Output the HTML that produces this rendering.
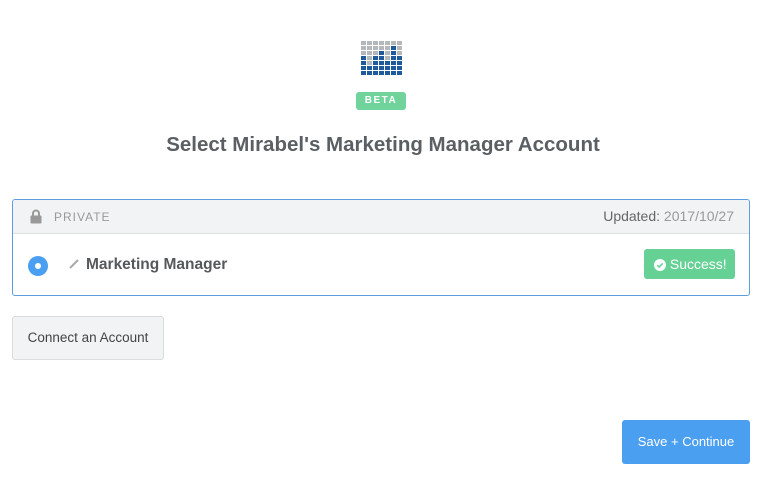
<!DOCTYPE html>
<html><head><style>
*{box-sizing:border-box;margin:0;padding:0}
body{width:766px;height:491px;background:#fff;font-family:"Liberation Sans",sans-serif;position:relative;overflow:hidden;color:#555}
.abs{position:absolute}
.cell{position:absolute;width:5px;height:4px}
</style></head><body>
<div class="abs" style="left:361px;top:41px;width:42px;height:36px" id="logo"></div>
<div class="abs" style="left:356px;top:92px;width:50px;height:18px;background:#6fd39b;border-radius:3px;color:#fff;font-weight:bold;font-size:10px;letter-spacing:1.5px;text-align:center;line-height:18px">BETA</div>
<div class="abs" style="left:0;width:766px;top:133px;text-align:center;font-size:20.5px;font-weight:bold;color:#5a5f63">Select Mirabel's Marketing Manager Account</div>
<div class="abs" style="left:12px;top:199px;width:738px;height:97px;border:1px solid #5e9ee0;border-radius:3px;overflow:hidden">
 <div style="height:34px;background:#f1f3f4;border-bottom:1px solid #dde0e2;position:relative">
  <svg class="abs" style="left:17px;top:9px" width="12" height="15" viewBox="0 0 12 15"><path d="M3 7V4.5a3 3 0 0 1 6 0V7" fill="none" stroke="#999" stroke-width="2"/><rect x="0.5" y="6.5" width="11" height="8" rx="1" fill="#999"/></svg>
  <span class="abs" style="left:41px;top:10px;font-size:12px;letter-spacing:1px;color:#999">PRIVATE</span>
  <span class="abs" style="right:15px;top:8px;font-size:14px;color:#666">Updated: <span style="color:#999">2017/10/27</span></span>
 </div>
 <div class="abs" style="left:15px;top:56px;width:20px;height:20px;border-radius:50%;background:#4a9ff0"><div style="position:absolute;left:7px;top:7px;width:6px;height:6px;border-radius:50%;background:#fff"></div></div>
 <svg class="abs" style="left:55px;top:58px" width="12" height="12" viewBox="0 0 12 12"><path d="M2 10L10 2" stroke="#aaa" stroke-width="2"/></svg>
 <span class="abs" style="left:73px;top:56px;font-size:15.5px;font-weight:bold;color:#55595c">Marketing Manager</span>
 <div class="abs" style="left:631px;top:49px;width:91px;height:30px;background:#66d194;border-radius:3px;color:#fff;font-size:14px;line-height:30px;padding-left:10px">
  <svg style="vertical-align:-2px" width="12" height="12" viewBox="0 0 12 12"><circle cx="6" cy="6" r="6" fill="#fff"/><path d="M3.3 6.2l1.8 1.8 3.6-3.6" stroke="#66d194" stroke-width="1.6" fill="none"/></svg> Success!
 </div>
</div>
<div class="abs" style="left:12px;top:316px;width:152px;height:44px;background:#f1f3f4;border:1px solid #d8dcde;border-radius:3px;font-size:13.5px;color:#444;text-align:center;line-height:42px">Connect an Account</div>
<div class="abs" style="left:622px;top:420px;width:128px;height:44px;background:#4a9ff0;border-radius:3px;font-size:13px;color:#fff;text-align:center;line-height:44px">Save + Continue</div>
<script>
var p=["ggggggg","gggggbg","gggbgbg","bgbbgbb","bgbbbbb","bbbbbbb","bbbbbbb"];
var l=document.getElementById('logo'),h='';
for(var r=0;r<7;r++)for(var c=0;c<7;c++)h+='<div class="cell" style="left:'+(c*6)+'px;top:'+(r*5)+'px;background:'+(p[r][c]=='g'?'#b5b8bb':'#1f5a9c')+'"></div>';
l.innerHTML=h;
</script>
</body></html>
